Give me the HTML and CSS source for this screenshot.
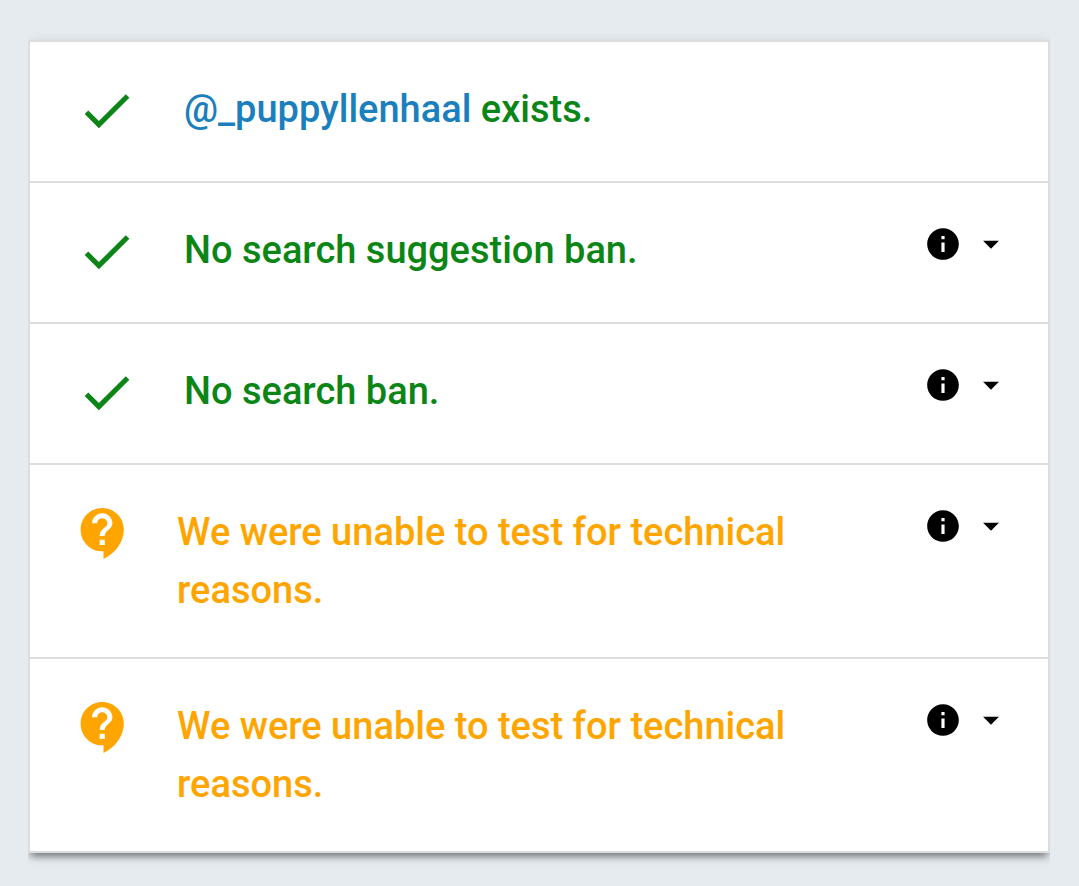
FILE: index.html
```html
<!DOCTYPE html>
<html lang="en">
  <head>
    <meta charset="UTF-8">
    <meta name="viewport" content="width=device-width, initial-scale=1">
    <title>Test results</title>
    <link rel="stylesheet" href="styles.css">
  </head>
  <body>
    <!-- Icon shapes -->
    <svg class="sprite" aria-hidden="true">
      <symbol id="check" viewBox="0 0 24 24">
        <path d="M9 16.17L4.83 12l-1.42 1.41L9 19 21 7l-1.41-1.41z"/>
      </symbol>
      <symbol id="support" viewBox="0 0 24 24">
        <path d="M11.5 2C6.81 2 3 5.81 3 10.5S6.81 19 11.5 19h.5v3c4.86-2.34 8-7 8-11.5C20 5.81 16.19 2 11.5 2zm1 14.5h-2v-2h2v2zm0-3.5h-2c0-3.25 3-3 3-5 0-1.1-.9-2-2-2s-2 .9-2 2h-2c0-2.21 1.79-4 4-4s4 1.79 4 4c0 2.5-3 2.75-3 5z"/>
      </symbol>
      <symbol id="info" viewBox="0 0 24 24">
        <path d="M12 2C6.48 2 2 6.48 2 12s4.48 10 10 10 10-4.48 10-10S17.52 2 12 2zm1 15h-2v-6h2v6zm0-8h-2V7h2v2z"/>
      </symbol>
      <symbol id="arrow" viewBox="0 0 24 24">
        <path d="M7 10l5 5 5-5z"/>
      </symbol>
    </svg>

    <ul class="results">
      <li class="result pass">
        <svg class="status-icon"><use href="#check"/></svg>
        <div class="result-text"><a href="#">@_puppyllenhaal</a> exists.</div>
      </li>
      <li class="result pass">
        <svg class="status-icon"><use href="#check"/></svg>
        <div class="result-text">No search suggestion ban.</div>
        <button class="details" type="button" aria-label="Details">
          <svg><use href="#info"/></svg>
          <svg><use href="#arrow"/></svg>
        </button>
      </li>
      <li class="result pass">
        <svg class="status-icon"><use href="#check"/></svg>
        <div class="result-text">No search ban.</div>
        <button class="details" type="button" aria-label="Details">
          <svg><use href="#info"/></svg>
          <svg><use href="#arrow"/></svg>
        </button>
      </li>
      <li class="result unknown">
        <svg class="status-icon"><use href="#support"/></svg>
        <div class="result-text">We were unable to test for technical reasons.</div>
        <button class="details" type="button" aria-label="Details">
          <svg><use href="#info"/></svg>
          <svg><use href="#arrow"/></svg>
        </button>
      </li>
      <li class="result unknown">
        <svg class="status-icon"><use href="#support"/></svg>
        <div class="result-text">We were unable to test for technical reasons.</div>
        <button class="details" type="button" aria-label="Details">
          <svg><use href="#info"/></svg>
          <svg><use href="#arrow"/></svg>
        </button>
      </li>
    </ul>
  </body>
</html>
```
FILE: styles.css
```css
body {
  margin: 0;
  padding: 40px 29px 32px 28px;
  background-color: #e6ebef;
  font-family: Roboto, Arial, sans-serif;
}
.sprite {
  display: none;
}
.results {
  margin: 0;
  padding: 0;
  list-style: none;
  background: white;
  border: 2px solid #dddddd;
  box-shadow: 0 8px 6px -5px rgba(0, 0, 0, 0.3), 0 5px 6px rgba(0, 0, 0, 0.14), 0 3px 13px rgba(0, 0, 0, 0.12);
  /* keep the shadow above and below only */
  clip-path: inset(-24px 0);
}
.result {
  display: flex;
  align-items: flex-start;
  padding: 38px 38px 38px 43px;
  border-bottom: 2px solid #dddddd;
}
.result:last-child {
  border-bottom: none;
}
.status-icon {
  flex: none;
  width: 61px;
  height: 61px;
  margin-right: 43px;
  fill: currentColor;
}
.result-text {
  flex: 1;
  font-size: 38px;
  font-weight: 500;
  line-height: 58px;
}
.result-text a {
  color: #1c7fbd;
  text-decoration: none;
}
.pass {
  padding-left: 46px;
  color: #0b8616;
}
.pass .status-icon {
  margin-right: 47px;
}
.pass .result-text {
  padding-bottom: 5px;
}
.unknown {
  color: #ffa500;
}
.details {
  display: flex;
  gap: 10px;
  margin: 4px 0 0;
  padding: 0;
  border: none;
  background: none;
  color: black;
  cursor: pointer;
}
.details svg {
  width: 38px;
  height: 38px;
  fill: currentColor;
}
```
